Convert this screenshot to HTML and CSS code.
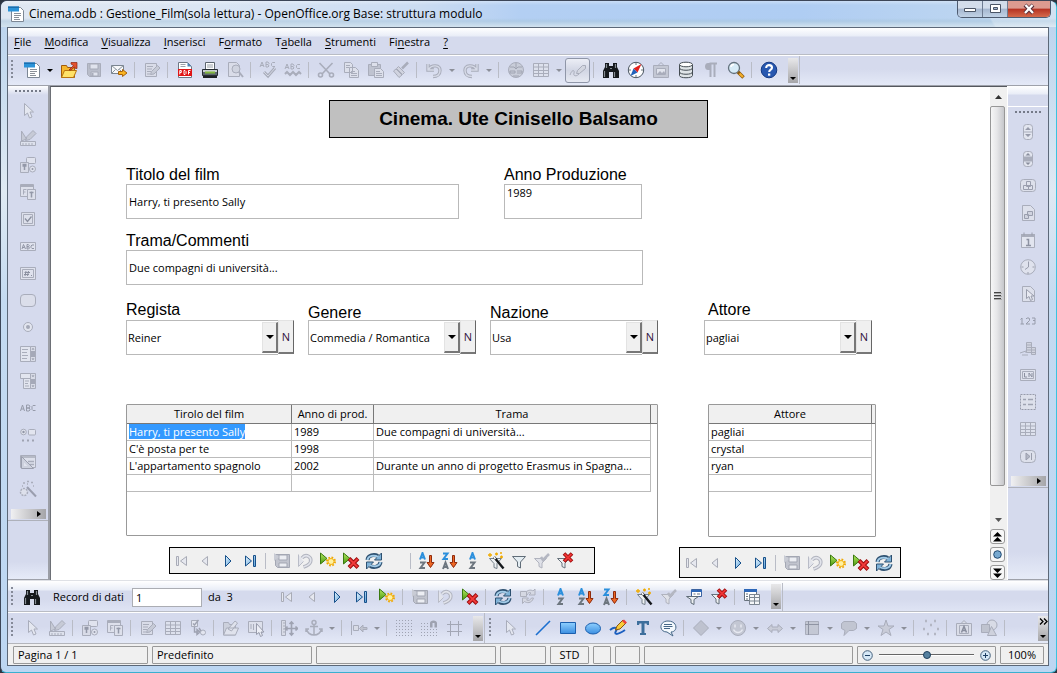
FILE: index.html
```html
<!DOCTYPE html>
<html lang="it">
<head>
<meta charset="utf-8">
<title>Cinema.odb : Gestione_Film(sola lettura) - OpenOffice.org Base: struttura modulo</title>
<link rel="stylesheet" href="styles.css">
</head>
<body>
<svg class="sprite" aria-hidden="true">
<defs>
<linearGradient id="gBlue" x2="0" y2="1"><stop stop-color="#8fd0ff"/><stop offset="1" stop-color="#3b8ee0"/></linearGradient>
<linearGradient id="gNav" x2="1" y2="1"><stop stop-color="#e8f6ff"/><stop offset="1" stop-color="#5aa0d8"/></linearGradient>
<linearGradient id="gGreen" x2="0" y2="1"><stop stop-color="#b4e860"/><stop offset="1" stop-color="#4a9a10"/></linearGradient>
</defs>
<symbol id="new" viewBox="0 0 18 18"><path d="M4.500 2.500h9l3 3v11h-12z" fill="#fff" stroke="#7c8794"/><path d="M1 1.500h11v5H1z" fill="#2b93d8"/><path d="M1 1.500h11v1.500H1z" fill="#1c6fae"/><path d="M7 8.500h7M7 10.500h7M7 12.500h5M7 14.500h6" stroke="#8a9098"/></symbol>
<symbol id="open" viewBox="0 0 18 18"><path d="M1.500 16.500v-12h5l1 2h7v10z" fill="#f6b72c" stroke="#a35c0a"/><path d="M1.500 16.500l3-7h12l-3 7z" fill="#ffe268" stroke="#b9740f"/><path d="M9 9l4.500-4.500L11 3V1.500h6v6h-1.500L14.500 6 11 9z" fill="#e2512e" stroke="#8c2412" stroke-width=".7"/></symbol>
<symbol id="save" viewBox="0 0 18 18"><path d="M2.500 2.500h13v13h-11l-2-2z" fill="#b9bdca" stroke="currentColor"/><path d="M5 3h8v5H5zM6 11h7v4H6z" fill="#e0e3ed" stroke="#a6aab8"/><path d="M7.500 12v3" stroke="currentColor" stroke-width="2"/></symbol>
<symbol id="mail" viewBox="0 0 18 18"><path d="M1.500 4.500h12v8h-12z" fill="#f7f8fa" stroke="#7b8590"/><path d="M1.500 4.500l6 5 6-5M1.500 12.500l4-4M13.500 12.500l-4-4" fill="none" stroke="#8a949e"/><path d="M8.500 10.500h4v-2l4.500 3.500-4.500 3.500v-2h-4z" fill="#f9b420" stroke="#a8620c"/></symbol>
<symbol id="edit" viewBox="0 0 18 18"><path d="M2.500 2.500h11v13h-11z" fill="#d9dce8" stroke="currentColor"/><path d="M4 5.500h6M4 8h5M4 10.500h4M4 13h3" stroke="currentColor"/><path d="M7.500 13.500l1-3 6-6 2.500 2.500-6 6z" fill="#c6cad6" stroke="currentColor"/></symbol>
<symbol id="pdf" viewBox="0 0 18 18"><path d="M2.500 1.500h9l4 4v11h-13z" fill="#fff" stroke="#6f7986"/><path d="M11.500 1.500v4h4z" fill="#4c84b8"/><path d="M4.500 3.500h5M4.500 5.500h5" stroke="#9aa2ac"/><path d="M2 8h14v7H2z" fill="#e01515"/><path d="M3.800 13.500v-4h1.500v2H4M8 9.500v4M8 9.500h1l1 1v2l-1 1H8M12.500 13.500v-4h2M12.500 11.500h1.500" fill="none" stroke="#fff"/></symbol>
<symbol id="print" viewBox="0 0 18 18"><path d="M4.500 8V1.500h9V8" fill="#fff" stroke="#5d6670"/><path d="M6 4h6M6 6h6" stroke="#9aa2aa"/><path d="M1.500 8.500h15v6h-15z" fill="#5f6870" stroke="#272d33"/><path d="M2 9h14v2H2z" fill="#c9cfd4"/><path d="M4 11.500h10" stroke="#82b83c" stroke-width="2"/><path d="M2 16h14" stroke="#1c2024" stroke-width="2"/></symbol>
<symbol id="preview" viewBox="0 0 18 18"><path d="M2.500 1.500h8l3 3v11h-11z" fill="#d9dce8" stroke="currentColor"/><circle cx="10" cy="8" r="4" fill="#cfd3df" stroke="currentColor"/><path d="M13 11l4 5" stroke="currentColor" stroke-width="2"/></symbol>
<symbol id="spell" viewBox="0 0 18 18"><path d="M1 6l2-5 2 5M1.800 4.500h2.400M7 1v5h2l1-1-1-1.500H7h2l1-1L9 1zM16 1.500h-2.500l-1 1v2l1 1H16" fill="none" stroke="currentColor"/><path d="M5 11l4 4 7-8" fill="none" stroke="currentColor" stroke-width="3"/><path d="M5 11l4 4 7-8" fill="none" stroke="#d3d7e4"/></symbol>
<symbol id="autospell" viewBox="0 0 18 18"><path d="M1 8l2-5 2 5M1.800 6.500h2.400M7 3v5h2l1-1-1-1.500H7h2l1-1L9 3zM16 3.500h-2.500l-1 1v2l1 1H16" fill="none" stroke="currentColor"/><path d="M1 13l2-2 3 3 3-3 3 3 3-3 2 2" fill="none" stroke="currentColor" stroke-width="2"/></symbol>
<symbol id="cut" viewBox="0 0 18 18"><path d="M2.500 2l10.500 11M15.500 2L5 13" stroke="currentColor" stroke-width="1.600"/><circle cx="3.500" cy="14" r="2" fill="none" stroke="currentColor" stroke-width="1.600"/><circle cx="14.500" cy="14" r="2" fill="none" stroke="currentColor" stroke-width="1.600"/></symbol>
<symbol id="copy" viewBox="0 0 18 18"><path d="M2.500 1.500h6l2 2v8h-8zM7.500 6.500h6l3 3v7h-9z" fill="#dde0eb" stroke="currentColor"/><path d="M4 4.500h4M4 6.500h3M9 10.500h4M9 12.500h6M9 14.500h6" stroke="currentColor"/></symbol>
<symbol id="paste" viewBox="0 0 18 18"><path d="M1.500 3.500h12v11h-12z" fill="#bfc3d0" stroke="currentColor"/><path d="M4.500 1.500h6v4h-6z" fill="#dde0eb" stroke="currentColor"/><path d="M7.500 7.500h6l3 3v6h-9z" fill="#dde0eb" stroke="currentColor"/><path d="M9 10.500h4M9 12.500h6M9 14.500h6" stroke="currentColor"/></symbol>
<symbol id="brush" viewBox="0 0 18 18"><path d="M16 1.500l-6 6" stroke="currentColor" stroke-width="2.500"/><path d="M6.500 5.500l6 6-2 2-6-6zM4 8l6 6-3 2.500L1.500 10z" fill="#d0d3df" stroke="currentColor"/></symbol>
<symbol id="undo" viewBox="0 0 18 18"><path d="M3 3v6h6M3.500 8.500C7 3 15 4 15 9.500c0 4-3 6-7 6" fill="none" stroke="currentColor" stroke-width="3.400"/><path d="M3 3v6h6M3.500 8.500C7 3 15 4 15 9.500c0 4-3 6-7 6" fill="none" stroke="#d6dae7" stroke-width="1.400"/></symbol>
<symbol id="redo" viewBox="0 0 18 18"><path d="M15 3v6H9M14.500 8.500C11 3 3 4 3 9.500c0 4 3 6 7 6" fill="none" stroke="currentColor" stroke-width="3.400"/><path d="M15 3v6H9M14.500 8.500C11 3 3 4 3 9.500c0 4 3 6 7 6" fill="none" stroke="#d6dae7" stroke-width="1.400"/></symbol>
<symbol id="link" viewBox="0 0 18 18"><circle cx="9" cy="9" r="7.500" fill="#c9cdd9" stroke="currentColor"/><path d="M3 6h4l2 2 2-2h4M9 2v5M3 10h5v2H3zM10 10h5v2h-5M6 15h6" fill="none" stroke="#a0a4b2"/></symbol>
<symbol id="table" viewBox="0 0 18 18"><path d="M1.500 2.500h15v13h-15zM1.500 6h15M1.500 9.500h15M1.500 12.500h15M6.500 2.500v13M11.500 2.500v13" fill="#dde1ed" stroke="currentColor"/></symbol>
<symbol id="pencil" viewBox="0 0 18 18"><path d="M1 14c2-6 5-5 4-2s2 4 5 1" fill="none" stroke="currentColor"/><path d="M7.500 12.500l1-3 5-5h3v3l-6 5z" fill="#d3d6e0" stroke="currentColor"/></symbol>
<symbol id="find" viewBox="0 0 18 18"><path d="M3 2h4v3h4V2h4v4l2 4v7h-6v-6H7v6H1v-7l2-4z" fill="#15191d"/><path d="M4.500 3v4M2.500 10v6M13.500 3v4M12.500 11v5M8 7.500h2" stroke="#868d93" stroke-width="1.200"/></symbol>
<symbol id="compass" viewBox="0 0 18 18"><circle cx="9" cy="9" r="7.700" fill="#fff" stroke="#4a5560"/><path d="M9 2v2M9 14v2M2 9h2M14 9h2" stroke="#68727b"/><path d="M14.500 3L6.500 7.500l4 4z" fill="#e3201b"/><path d="M3.500 15l3-7.500 4 4z" fill="#2362ba"/></symbol>
<symbol id="gallery" viewBox="0 0 18 18"><path d="M6 4.500l3-3 3 3" fill="none" stroke="currentColor"/><path d="M1.500 4.500h15v12h-15z" fill="#c4c8d4" stroke="currentColor"/><path d="M4.500 7.500h9v6h-9z" fill="#e1e4ed" stroke="currentColor"/><path d="M5 13l3-3 2 2 2-2 1.500 3" fill="currentColor"/></symbol>
<symbol id="db" viewBox="0 0 18 18"><path d="M2.500 3.500v11c0 3 13 3 13 0v-11" fill="#dfe4e7" stroke="#444c53"/><ellipse cx="9" cy="3.500" rx="6.500" ry="2.300" fill="#fff" stroke="#444c53"/><path d="M2.500 7c0 3 13 3 13 0M2.500 11c0 3 13 3 13 0" fill="none" stroke="#444c53"/></symbol>
<symbol id="para" viewBox="0 0 18 18"><path d="M8.500 16V2.500H15M12.500 2.500V16" fill="none" stroke="currentColor" stroke-width="2"/><path d="M8.500 2H6C2 2 2 9 6 9h2.500z" fill="currentColor"/></symbol>
<symbol id="zoom" viewBox="0 0 18 18"><circle cx="7" cy="7" r="5.500" fill="#d7ecf8" stroke="#64727e" stroke-width="1.300"/><path d="M4 6c0-1.500 1.500-2.500 3-2.500" fill="none" stroke="#fff" stroke-width="1.500"/><path d="M11 11l5.500 5.500" stroke="#8a5a10" stroke-width="3.500"/><path d="M12.500 12.500l3.500 3.500" stroke="#f5ae28" stroke-width="2.200"/></symbol>
<symbol id="help" viewBox="0 0 18 18"><circle cx="9" cy="9" r="7.800" fill="#2858b0" stroke="#153a84"/><path d="M6.200 7c0-4 5.800-3.500 5.800-.3C12 8.800 9.200 8.500 9.200 11" fill="none" stroke="#fff" stroke-width="2.100"/><path d="M8 12.500h2.300v2.200H8z" fill="#fff"/></symbol>
<symbol id="arrow" viewBox="0 0 18 18"><path d="M5.500 1.500v12l3-2.500 2 5 2.500-1-2-5h3.500z" fill="#e4e7f0" stroke="currentColor"/></symbol>
<symbol id="design" viewBox="0 0 18 18"><path d="M1.500 12.500h15v4h-15z" fill="#dde1ec" stroke="currentColor"/><path d="M2.500 12V2l5 8zM6.500 11.500l1.500-4 6-6 3 3-6 6z" fill="#c6cad6" stroke="currentColor"/><path d="M4 14v2M7 14v2M10 14v2M13 14v2" stroke="currentColor"/></symbol>
<symbol id="control" viewBox="0 0 18 18"><rect x="7.500" y="1.500" width="9" height="6" rx="1" fill="#e0e3ee" stroke="currentColor"/><path d="M1.500 6.500h8v10h-8z" fill="#d8dbe7" stroke="currentColor"/><path d="M3.500 10h4M5.500 8v6M3.500 8.500h4" stroke="#9398a8" stroke-width="1.500"/><circle cx="13.500" cy="13" r="3" fill="#e0e3ee" stroke="currentColor"/><circle cx="13.500" cy="13" r="1" fill="#9398a8"/></symbol>
<symbol id="form" viewBox="0 0 18 18"><path d="M1.500 1.500h13v12h-13z" fill="#dde0eb" stroke="currentColor"/><path d="M1.500 3h13" stroke="currentColor" stroke-width="2"/><path d="M4.500 11.500v-5h3M4.500 9h2" fill="none" stroke="currentColor"/><path d="M8.500 6.500h8v10h-8z" fill="#dde0eb" stroke="currentColor"/><path d="M10.500 9.500h4M12.500 8.500v6" stroke="#9398a8" stroke-width="1.500"/></symbol>
<symbol id="check" viewBox="0 0 18 18"><path d="M2.500 2.500h13v13h-13zM4.500 4.500h9v9h-9z" fill="#dde0eb" stroke="currentColor"/><path d="M6 8.500l2.500 3 4-5" fill="none" stroke="#8b90a0" stroke-width="1.300"/></symbol>
<symbol id="abcbox" viewBox="0 0 18 18"><path d="M1.500 5.500h15v8h-15z" fill="#dfe2ed" stroke="currentColor"/><path d="M3 12l1.500-4.500L6.500 12M3.500 10.500h2M8 7.500V12h1.500l1-1-1-1.300H8h1.500l.8-1-1-1.200zM15 8h-2l-1 1v1.500l1 1h2" fill="none" stroke="#9095a5"/></symbol>
<symbol id="fmt" viewBox="0 0 18 18"><path d="M1.500 3.500h15v12h-15zM3.500 5.500h11v8h-11z" fill="#dfe2ed" stroke="currentColor"/><path d="M7 7l-1 5M9.500 7l-1 5M5.500 8.500H11M5 10.500h5M12 11.500h1" stroke="#8b90a0"/></symbol>
<symbol id="pushb" viewBox="0 0 18 18"><rect x="1.500" y="3.500" width="15" height="12" rx="3.500" fill="#dbdeea" stroke="currentColor"/></symbol>
<symbol id="radio" viewBox="0 0 18 18"><circle cx="9" cy="9" r="4.500" fill="#e2e5ef" stroke="currentColor"/><circle cx="9" cy="9" r="2" fill="#a5a9b8"/></symbol>
<symbol id="listb" viewBox="0 0 18 18"><path d="M1.500 1.500h10v15h-10z" fill="#e2e5ef" stroke="currentColor"/><path d="M3 4.500h6M3 7.500h5M3 10.500h6M3 13.500h5" stroke="currentColor"/><path d="M11.500 1.500h5v15h-5z" fill="#d8dbe6" stroke="currentColor"/><path d="M12 6h4v6h-4z" fill="#a5a9b8"/><path d="M14 3l1.500 1.500h-3zM14 15l1.500-1.500h-3z" fill="#888d9d"/></symbol>
<symbol id="combo" viewBox="0 0 18 18"><path d="M1.500 1.500h10v5h-10zM4.500 6.500h7v10h-7z" fill="#e2e5ef" stroke="currentColor"/><path d="M6 9h4M6 11.500h3M6 14h4" stroke="currentColor"/><path d="M11.500 1.500h5v15h-5z" fill="#d8dbe6" stroke="currentColor"/><path d="M12 7h4v5h-4z" fill="#a5a9b8"/><path d="M14 5l1.500-1.500h-3zM14 15l1.500-1.500h-3z" fill="#888d9d"/></symbol>
<symbol id="abc" viewBox="0 0 18 18"><path d="M1.500 12l2-6 2 6M2.200 10h2.600M7.500 6v6H10l1-1v-1l-1-1H7.500H10l.8-1V7l-1-1zM16.500 6.500H14l-1 1v3l1 1h2.500" fill="none" stroke="#969baa"/></symbol>
<symbol id="more" viewBox="0 0 18 18"><circle cx="4.500" cy="6" r="2.800" fill="#e2e5ef" stroke="currentColor"/><circle cx="4.500" cy="6" r="1.200" fill="#9095a5"/><rect x="9.500" y="3.500" width="7" height="5.500" rx="1" fill="#e2e5ef" stroke="currentColor"/><path d="M3 14.500h2M8 14.500h2M13 14.500h2" stroke="#9fa3b2" stroke-width="2"/></symbol>
<symbol id="fdesign" viewBox="0 0 18 18"><path d="M1.500 2.500h15v12h-15z" fill="#dde0eb" stroke="currentColor"/><path d="M1.500 4h15M9 8.500h6M10 11.500h5" stroke="currentColor" stroke-width="1.500"/><path d="M2.500 15.500v-12l12 12z" fill="#ced2de" stroke="#9ca0af"/><path d="M5 13V9.500L8.500 13z" fill="#e2e5ef"/></symbol>
<symbol id="wand" viewBox="0 0 18 18"><path d="M8 7l9 9.500" stroke="#9a9eae" stroke-width="2"/><circle cx="5" cy="12" r="3.500" fill="#dde0eb" stroke="currentColor" stroke-width="1.500" stroke-dasharray="2 1"/><path d="M4 3h2M8 1.500h2M12 2.500h2M3 6h1M14 6h1M8 4h1" stroke="currentColor" stroke-width="1.500"/></symbol>
<symbol id="spin" viewBox="0 0 18 18"><rect x="4.500" y="1.500" width="9" height="15" rx="3" fill="#e2e5ef" stroke="currentColor"/><path d="M5 9h8" stroke="currentColor"/><path d="M9 4l3 3H6zM9 14l3-3H6z" fill="#979bab"/></symbol>
<symbol id="sbar" viewBox="0 0 18 18"><rect x="4.500" y="1.500" width="9" height="15" rx="3" fill="#e2e5ef" stroke="currentColor"/><path d="M5 6.500h8v5H5z" fill="#a9adbb"/><path d="M9 3l2.500 2.500h-5zM9 15l2.500-2.500h-5z" fill="#888d9d"/></symbol>
<symbol id="imgb" viewBox="0 0 18 18"><rect x="1.500" y="2.500" width="15" height="12" rx="3" fill="#dde0eb" stroke="currentColor"/><path d="M7.500 4.500h4v5h-4zM4.500 8.500h5v4h-5zM9.500 8.500h4v4h-4z" fill="#dfe2ec" stroke="#9a9eae"/></symbol>
<symbol id="imgc" viewBox="0 0 18 18"><path d="M3.500 1.500h8l4 4v11h-12z" fill="#dde0eb" stroke="currentColor"/><path d="M8.500 7.500h5v4h-5zM5.500 10.500h4v4h-4z" fill="#d0d3df" stroke="#9a9eae"/></symbol>
<symbol id="date" viewBox="0 0 18 18"><path d="M2.500 3.500h13v13h-13z" fill="#e2e5ef" stroke="currentColor"/><path d="M2 4.500h14" stroke="currentColor" stroke-width="3"/><path d="M5 1.500v3M13 1.500v3" stroke="#999dac"/><path d="M7.500 8.500h2v5.500M7 14.500h5" fill="none" stroke="#8d92a2" stroke-width="1.500"/></symbol>
<symbol id="time" viewBox="0 0 18 18"><circle cx="9" cy="9" r="7.300" fill="#dfe2ed" stroke="currentColor"/><path d="M9.500 3.500V9L6 11.500M2.500 9h2M13.500 9h2M9 14v2" fill="none" stroke="#999dac"/></symbol>
<symbol id="file" viewBox="0 0 18 18"><path d="M3.500 1.500h8l4 4v11h-12z" fill="#dde0eb" stroke="currentColor"/><path d="M7.500 4.500v9l2.500-2 1.500 4 2-1-1.500-3.500h3z" fill="#e8eaf2" stroke="#999dac"/></symbol>
<symbol id="num" viewBox="0 0 18 18"><path d="M1.500 7.500L3 6v6M1.500 12h3.500M7 7l1-1h2l.5 1v1.500L7 12h4M13 6h3v2.500h-2H16V12h-3" fill="none" stroke="#969baa"/></symbol>
<symbol id="money" viewBox="0 0 18 18"><path d="M7.500 3.500h5v10h-5zM12.500 8.500h4v7h-4z" fill="#d0d3df" stroke="currentColor"/><path d="M8 6h4M8 8.500h4M8 11h4M13 11h3M13 13.500h3M1 14l6-2v2M3 16h6" stroke="currentColor" fill="none"/></symbol>
<symbol id="pattern" viewBox="0 0 18 18"><path d="M1.500 3.500h15v11h-15zM3.500 5.500h11v7h-11z" fill="#dfe2ed" stroke="currentColor"/><path d="M5.500 7v4H8M10 11V7l3 4V7" fill="none" stroke="#8b90a0"/></symbol>
<symbol id="group" viewBox="0 0 18 18"><path d="M1.500 1.500h15v15h-15z" fill="#dde0eb" stroke="#979bab" stroke-dasharray="2 1"/><path d="M4 6.500h3M4 11.500h3M9 6.500h5M9 11.500h5" stroke="#9fa3b2" stroke-width="1.500"/></symbol>
<symbol id="navc" viewBox="0 0 18 18"><rect x="1.500" y="3.500" width="15" height="12" rx="4" fill="#dde0eb" stroke="currentColor"/><path d="M7 6l4 3.500L7 13zM12.500 6v7" fill="#b3b7c5" stroke="#999dac"/></symbol>
<symbol id="first" viewBox="0 0 18 18"><path d="M3.500 4.500h2v9h-2zM13.500 4.500v9l-6-4.500z" fill="#e6e8ef" stroke="#a8abb6"/></symbol>
<symbol id="prev" viewBox="0 0 18 18"><path d="M11.500 4.500v9L6 9z" fill="#e6e8ef" stroke="#a8abb6"/></symbol>
<symbol id="next" viewBox="0 0 18 18"><path d="M6.500 3.500v11l5.500-5.500z" fill="url(#gNav)" stroke="#17508a"/></symbol>
<symbol id="last" viewBox="0 0 18 18"><path d="M3.500 4v10l6-5zM11.500 3.500h2v11h-2z" fill="url(#gNav)" stroke="#17508a"/></symbol>
<symbol id="rnew" viewBox="0 0 18 18"><path d="M1.500 1v11l6.500-5.500z" fill="url(#gGreen)" stroke="#3a7a10"/><circle cx="12" cy="9.500" r="4" fill="none" stroke="#f0a800" stroke-width="2" stroke-dasharray="1.700 1.440"/><circle cx="12" cy="9.500" r="3" fill="#fff1a0" stroke="#f2b010"/></symbol>
<symbol id="rdel" viewBox="0 0 18 18"><path d="M1.500 1v11l6.500-5.500z" fill="url(#gGreen)" stroke="#3a7a10"/><path d="M7 6.500l9 9M16 6.500l-9 9" stroke="#9c0c0c" stroke-width="4"/><path d="M7.500 7l8 8M15.500 7l-8 8" stroke="#f03a3a" stroke-width="2"/></symbol>
<symbol id="rundo" viewBox="0 0 18 18"><path d="M2.500 2.500v12l5-5" fill="#e2e4eb" stroke="#b9bcc7"/><path d="M6 6c4-5 10-1 8.500 4-1 3-4 4-7 5" fill="none" stroke="#b0b3be" stroke-width="3.600"/><path d="M6 6c4-5 10-1 8.500 4-1 3-4 4-7 5" fill="none" stroke="#e2e4eb" stroke-width="1.600"/></symbol>
<symbol id="rsave" viewBox="0 0 18 18"><path d="M2.500 2.500h14v13h-12l-2-2z" fill="#c1c4ce" stroke="#a3a7b3"/><path d="M6 3h8v5H6zM6 11h8v4H6z" fill="#eceef3" stroke="#a3a7b3"/><path d="M1 1l5 4-5 4z" fill="#c9ccd5"/></symbol>
<symbol id="refresh" viewBox="0 0 18 18"><g fill="none" stroke="#2d5070" stroke-width="4"><path d="M2.500 8C3 3 9 2 13 4"/><path d="M15.500 10C15 15 9 16 5 14"/></g><path d="M16.500 1v7h-7zM1.500 17v-7h7z" fill="#7fb2d8" stroke="#2d5070"/><g fill="none" stroke="#a2cbe8" stroke-width="2"><path d="M2.500 8C3 3.500 9 2.500 13.500 5"/><path d="M15.500 10C15 14.500 9 15.500 4.500 13"/></g></symbol>
<symbol id="refreshg" viewBox="0 0 18 18"><g fill="#d5d8e3" stroke="#adb0bd"><path d="M6.500 5C9 1 13 2 14 3l2-2v6h-6l2-2c-2-1-3 0-4 2zM14.500 10c-2 6-7 5-9 3.500l-2 2V10h6l-2 2c2 1 4 0 5-2z"/><path d="M1.500 3.500h6v5h-6z"/></g></symbol>
<symbol id="az" viewBox="0 0 18 18"><path d="M6 7.500L8.500 1 11 7.500M7 5.500h3" fill="none" stroke="#2b8fdc" stroke-width="2"/><path d="M6 10.500h4.500L6.500 16H11" fill="none" stroke="#6d767f" stroke-width="2"/></symbol>
<symbol id="azd" viewBox="0 0 18 18"><path d="M2 7.500L4.500 1 7 7.500M3 5.500h3" fill="none" stroke="#2b8fdc" stroke-width="2"/><path d="M2 10.500h4.500L2.500 16H7" fill="none" stroke="#6d767f" stroke-width="2"/><path d="M11.500 3.500h2v7h2.500l-3.500 5-3.500-5h2.500z" fill="#ee6724" stroke="#8e2a0c"/></symbol>
<symbol id="zad" viewBox="0 0 18 18"><path d="M2 1.500h4.500L2.500 7H7" fill="none" stroke="#2b8fdc" stroke-width="2"/><path d="M2 17l2.500-6.500L7 17M3 15h3" fill="none" stroke="#6d767f" stroke-width="2"/><path d="M11.500 3.500h2v7h2.500l-3.500 5-3.500-5h2.500z" fill="#ee6724" stroke="#8e2a0c"/></symbol>
<symbol id="fwiz" viewBox="0 0 18 18"><path d="M2.500 6.500h12l-4.500 5v5l-3-1v-4z" fill="#eef1f3" stroke="#75808a"/><path d="M7 5l9.500 11.500" stroke="#15181c" stroke-width="2.400"/><path d="M7 5l1.500 2" stroke="#fff" stroke-width="1.500"/><path d="M1 3h4M3 1v4M8 2h3M9.500.5v3M13 5h3M14.500 3.500v3M13 1h2" stroke="#f0ab00" stroke-width="1.300"/></symbol>
<symbol id="filter" viewBox="0 0 18 18"><path d="M2.500 4.500h13l-5 5.500v6l-3-1.500V10z" fill="#e4edf2" stroke="#606d78"/></symbol>
<symbol id="fapply" viewBox="0 0 18 18"><path d="M1.500 6.500h12l-4.500 4.500v5l-3-1.500V11z" fill="#dfe1e8" stroke="#b0b3be"/><path d="M8 5l2 3 6-6" fill="none" stroke="#b4b7c2" stroke-width="2.500"/></symbol>
<symbol id="fdel" viewBox="0 0 18 18"><path d="M1.500 6.500h12l-4.500 4.500v5l-3-1.500V11z" fill="#eef1f3" stroke="#66717b"/><path d="M8 1.500l8 8M16 1.500l-8 8" stroke="#9c0c0c" stroke-width="3.700"/><path d="M8.500 2l7 7M15.500 2l-7 7" stroke="#ee3434" stroke-width="1.800"/></symbol>
<symbol id="fform" viewBox="0 0 18 18"><path d="M6.500 1.500h10v7h-10z" fill="#fff" stroke="#3b63a0"/><path d="M6 3h11" stroke="#2d67b8" stroke-width="2"/><path d="M8.500 6h2M12 6h3" stroke="#687380"/><path d="M1.500 8.500h12l-4.500 3v5l-3-1.500v-3.500z" fill="#eef1f3" stroke="#606d78"/></symbol>
<symbol id="dsrc" viewBox="0 0 18 18"><path d="M1.500 1.500h12v11h-12z" fill="#fff" stroke="#68727c"/><path d="M1 2.500h13" stroke="#2d67b8" stroke-width="3"/><path d="M3 6h2M3 8.500h2M3 11h2" stroke="#68727c"/><path d="M6.500 6.500h10v10h-10zM6.500 9.500h10M6.500 13h10M11.500 6.500v10" fill="#f4f6f8" stroke="#7b8590"/></symbol>
<symbol id="order" viewBox="0 0 18 18"><path d="M2.500 1.500h6v6h-6z" fill="#e2e5ef" stroke="currentColor"/><path d="M4 4.500l1.500 1.500 4-5M5.500 8v5h4M10 9l2 3M8 10.500l3 2.500-3 2.500z" fill="none" stroke="#9ea2b1" stroke-width="1.400"/><circle cx="14" cy="13.500" r="2.500" fill="#e2e5ef" stroke="currentColor"/></symbol>
<symbol id="opend" viewBox="0 0 18 18"><path d="M1.500 16V3.500h5l1 2h6V16z" fill="#ccd0dc" stroke="currentColor"/><path d="M1.500 16l3-7h12l-3 7zM6 10l7-8 2.500 2-6 8z" fill="#dfe2ec" stroke="currentColor"/></symbol>
<symbol id="autof" viewBox="0 0 18 18"><path d="M1.500 2.500h14v11h-14z" fill="#dde0eb" stroke="currentColor"/><path d="M4 5v5M6.500 5v6" stroke="currentColor"/><path d="M9.500 4.500v11l2.500-2 1.500 4 2-1-1.500-3.500h3z" fill="#eceef5" stroke="#979bab"/></symbol>
<symbol id="pos" viewBox="0 0 18 18"><path d="M1.500 1.500h4v15h-4z" fill="#d8dbe6" stroke="currentColor"/><path d="M3 4h2M3 7h2M3 10h2M3 13h2" stroke="currentColor"/><path d="M11.500 3v13M5.500 9.500h12M9.500 5l2-2 2 2M9.500 14l2 2 2-2M7.500 7.500l-2 2 2 2M15.500 7.500l2 2-2 2" fill="none" stroke="#9fa3b2" stroke-width="1.600"/></symbol>
<symbol id="anchor" viewBox="0 0 18 18"><circle cx="9" cy="3.500" r="2" fill="none" stroke="currentColor" stroke-width="1.500"/><path d="M9 5.500v10M5 7.500h8M1.500 10c1 4 4 6 7.500 6s6.500-2 7.500-6M1 13v-3h3M17 13v-3h-3" fill="none" stroke="currentColor" stroke-width="1.500"/></symbol>
<symbol id="align" viewBox="0 0 18 18"><path d="M1.500 2v14" stroke="currentColor"/><path d="M3.500 6.500h5v5h-5z" fill="#d8dbe6" stroke="currentColor"/><path d="M9.500 9.500L13 6v2.500h4v2h-4V13z" fill="#bfc2ce" stroke="currentColor"/></symbol>
<symbol id="grid" viewBox="0 0 18 18"><path d="M1 1.500h16M1 4.500h16M1 7.500h16M1 10.500h16M1 13.500h16M1 16.500h16" stroke="#9fa3b2" stroke-dasharray="1 2"/></symbol>
<symbol id="snap" viewBox="0 0 18 18"><path d="M1 4.500h10M1 7.500h10M1 10.500h16M1 13.500h16M1 16.500h16" stroke="#9fa3b2" stroke-dasharray="1 2"/><path d="M10 8.500V4c0-3.500 7-3.500 7 0v4.500h-2.500V4h-2v4.500z" fill="#9ea2b0"/></symbol>
<symbol id="guides" viewBox="0 0 18 18"><path d="M2 5.500h15M2 12.500h15M5.500 2v15M13.500 2v15" stroke="#a3a7b5"/></symbol>
<symbol id="line" viewBox="0 0 18 18"><path d="M2 16L16 2" stroke="#1b6fd0" stroke-width="1.600"/></symbol>
<symbol id="rect" viewBox="0 0 18 18"><path d="M1.500 3.500h15v11h-15z" fill="url(#gBlue)" stroke="#1b5fae"/></symbol>
<symbol id="oval" viewBox="0 0 18 18"><ellipse cx="9" cy="9.500" rx="7.500" ry="5.500" fill="url(#gBlue)" stroke="#1b5fae"/></symbol>
<symbol id="free" viewBox="0 0 18 18"><path d="M1 11c5-4 8-2 6 1s0 5 9-1" fill="none" stroke="#1b5fc0" stroke-width="2"/><path d="M6.500 11l1.500-4 6-6 3 3-6 6z" fill="#f8cb3a" stroke="#89540e"/><path d="M13 2l2-1.500 3 3L16 5z" fill="#ea4040"/></symbol>
<symbol id="text" viewBox="0 0 18 18"><path d="M3 2h12v4h-2l-.5-1.500H10.500V14H12v2H6v-2h1.500V4.500H5.500L5 6H3z" fill="#3e6f9c"/></symbol>
<symbol id="call" viewBox="0 0 18 18"><path d="M9 2c10 0 10 11 3 11l2 4-6-4C-.5 13 0 2 9 2z" fill="#f4f9fd" stroke="#456787"/><path d="M5 5.500h8M4.500 7.500h9M5 9.500h6" stroke="#456787"/></symbol>
<symbol id="diamond" viewBox="0 0 18 18"><path d="M9 1.500L16.500 9 9 16.500 1.500 9z" fill="#bec2cf" stroke="currentColor"/></symbol>
<symbol id="smile" viewBox="0 0 18 18"><circle cx="9" cy="9" r="7.500" fill="#c3c7d3" stroke="currentColor"/><path d="M6 5.500v3M12 5.500v3M4.500 10.500c2 4 7 4 9 0" fill="none" stroke="#e7e9f1" stroke-width="1.500"/></symbol>
<symbol id="harrow" viewBox="0 0 18 18"><path d="M1.500 9.500L6 5.500v2.500h6V5.500l4.500 4-4.500 4V11H6v2.500z" fill="#c9ccd8" stroke="currentColor"/></symbol>
<symbol id="flow" viewBox="0 0 18 18"><path d="M2.500 2.500h13v13h-13z" fill="#c4c8d4" stroke="currentColor"/><path d="M5.500 2v14M2 5.500h14" stroke="#8f94a3"/></symbol>
<symbol id="bubble" viewBox="0 0 18 18"><path d="M4 2.500h10l2.500 2v5l-3 2H9l-5 5 1-5-3.500-2v-5z" fill="#c1c5d1" stroke="currentColor"/></symbol>
<symbol id="star" viewBox="0 0 18 18"><path d="M9 1l2 6h6l-5 3.500 2 6-5-3.500-5 3.500 2-6L1 7h6z" fill="#c9ccd8" stroke="currentColor"/></symbol>
<symbol id="points" viewBox="0 0 18 18"><path d="M3 2h2M12 2h2M8 6h2M1 10h2M15 10h2M5 15h2M12 15h2" stroke="#b3b6c3" stroke-width="2.500"/></symbol>
<symbol id="fontw" viewBox="0 0 18 18"><path d="M6 4.500l3-3 3 3M1.500 4.500h15v12h-15zM4.500 6.500h9v8h-9z" fill="#dadde8" stroke="currentColor"/><path d="M6.500 13.500L9 7.500l2.500 6M7.500 11.500h3" fill="none" stroke="#888d9d" stroke-width="1.500"/></symbol>
<symbol id="shapes" viewBox="0 0 18 18"><circle cx="12" cy="6" r="5" fill="#d8dbe6" stroke="currentColor"/><path d="M1.500 5.500h8v8h-8z" fill="#bfc3cf" stroke="currentColor"/><path d="M11.500 7.500l5 9h-9z" fill="#ced1dc" stroke="currentColor"/></symbol>
</svg>

<div class="window">
<header class="titlebar">
  <svg class="ic"><use href="#new"/></svg>
  <h1>Cinema.odb : Gestione_Film(sola lettura) - OpenOffice.org Base: struttura modulo</h1>
  <div class="winbtns">
    <button aria-label="Riduci a icona"><svg width="14" height="10" viewBox="0 0 14 10"><path d="M1.500 4.500h11v3h-11z" fill="#fff" stroke="#4b5566"/></svg></button>
    <button aria-label="Ingrandisci"><svg width="14" height="12" viewBox="0 0 14 12"><path d="M2.500 1.500h10v8h-10z" fill="#fff" stroke="#4b5566"/><path d="M5.500 4.500h4v2h-4z" fill="#9fb3cf" stroke="#4b5566"/></svg></button>
    <button class="close" aria-label="Chiudi"><svg width="14" height="12" viewBox="0 0 14 12"><path d="M3 2l8 8M11 2l-8 8" stroke="#59303a" stroke-width="4"/><path d="M3.500 2l7.500 8M10.500 2L3 10" stroke="#fff" stroke-width="2.300"/></svg></button>
  </div>
</header>

<div class="client">
<nav class="menubar">
  <button><u>F</u>ile</button><button><u>M</u>odifica</button><button><u>V</u>isualizza</button><button><u>I</u>nserisci</button><button>F<u>o</u>rmato</button><button>T<u>a</u>bella</button><button><u>S</u>trumenti</button><button>Fi<u>n</u>estra</button><button><u>?</u></button>
</nav>

<div class="bar std">
  <i class="grip"></i>
  <button class="b"><svg class="ic"><use href="#new"/></svg></button><button class="dd on"></button>
  <button class="b"><svg class="ic"><use href="#open"/></svg></button>
  <button class="b"><svg class="ic"><use href="#save"/></svg></button>
  <button class="b"><svg class="ic"><use href="#mail"/></svg></button><i class="sep"></i>
  <button class="b"><svg class="ic"><use href="#edit"/></svg></button><i class="sep"></i>
  <button class="b"><svg class="ic"><use href="#pdf"/></svg></button>
  <button class="b"><svg class="ic"><use href="#print"/></svg></button>
  <button class="b"><svg class="ic"><use href="#preview"/></svg></button><i class="sep"></i>
  <button class="b"><svg class="ic"><use href="#spell"/></svg></button>
  <button class="b"><svg class="ic"><use href="#autospell"/></svg></button><i class="sep"></i>
  <button class="b"><svg class="ic"><use href="#cut"/></svg></button>
  <button class="b"><svg class="ic"><use href="#copy"/></svg></button>
  <button class="b"><svg class="ic"><use href="#paste"/></svg></button>
  <button class="b"><svg class="ic"><use href="#brush"/></svg></button><i class="sep"></i>
  <button class="b"><svg class="ic"><use href="#undo"/></svg></button><button class="dd"></button>
  <button class="b"><svg class="ic"><use href="#redo"/></svg></button><button class="dd"></button><i class="sep"></i>
  <button class="b"><svg class="ic"><use href="#link"/></svg></button>
  <button class="b"><svg class="ic"><use href="#table"/></svg></button><button class="dd"></button>
  <button class="b pressed"><svg class="ic"><use href="#pencil"/></svg></button><i class="sep"></i>
  <button class="b"><svg class="ic"><use href="#find"/></svg></button>
  <button class="b"><svg class="ic"><use href="#compass"/></svg></button>
  <button class="b"><svg class="ic"><use href="#gallery"/></svg></button>
  <button class="b"><svg class="ic"><use href="#db"/></svg></button>
  <button class="b"><svg class="ic"><use href="#para"/></svg></button>
  <button class="b"><svg class="ic"><use href="#zoom"/></svg></button><i class="sep"></i>
  <button class="b"><svg class="ic"><use href="#help"/></svg></button>
  <button class="over"></button><i class="edge"></i>
</div>

<div class="work">
  <aside class="side">
    <div class="tools">
      <i class="hgrip"></i>
      <button class="v"><svg class="ic"><use href="#arrow"/></svg></button>
      <button class="v"><svg class="ic"><use href="#design"/></svg></button>
      <button class="v"><svg class="ic"><use href="#control"/></svg></button>
      <button class="v"><svg class="ic"><use href="#form"/></svg></button>
      <button class="v"><svg class="ic"><use href="#check"/></svg></button>
      <button class="v"><svg class="ic"><use href="#abcbox"/></svg></button>
      <button class="v"><svg class="ic"><use href="#fmt"/></svg></button>
      <button class="v"><svg class="ic"><use href="#pushb"/></svg></button>
      <button class="v"><svg class="ic"><use href="#radio"/></svg></button>
      <button class="v"><svg class="ic"><use href="#listb"/></svg></button>
      <button class="v"><svg class="ic"><use href="#combo"/></svg></button>
      <button class="v"><svg class="ic"><use href="#abc"/></svg></button>
      <button class="v"><svg class="ic"><use href="#more"/></svg></button>
      <button class="v"><svg class="ic"><use href="#fdesign"/></svg></button>
      <button class="v"><svg class="ic"><use href="#wand"/></svg></button>
      <button class="hover"></button>
    </div>
    <div class="rest"></div>
  </aside>

  <main class="page">
    <h2>Cinema. Ute Cinisello Balsamo</h2>
    <div class="row r1">
      <div class="field w-title"><label for="titolo">Titolo del film</label><input id="titolo" value="Harry, ti presento Sally" readonly></div>
      <div class="field w-year"><label for="anno">Anno Produzione</label><textarea id="anno" readonly>1989</textarea></div>
    </div>
    <div class="row r2">
      <div class="field w-plot"><label for="trama">Trama/Commenti</label><input id="trama" value="Due compagni di università..." readonly></div>
    </div>
    <div class="row r3">
      <div class="field w-combo"><label for="regista">Regista</label><div class="cb"><span class="sel"><select id="regista"><option>Reiner</option></select><i></i></span><button>N</button></div></div>
      <div class="field w-combo lowlabel"><label for="genere">Genere</label><div class="cb"><span class="sel"><select id="genere"><option>Commedia / Romantica</option></select><i></i></span><button>N</button></div></div>
      <div class="field w-combo lowlabel"><label for="nazione">Nazione</label><div class="cb"><span class="sel"><select id="nazione"><option>Usa</option></select><i></i></span><button>N</button></div></div>
      <div class="field w-combo actor"><label for="attore">Attore</label><div class="cb"><span class="sel"><select id="attore"><option>pagliai</option></select><i></i></span><button>N</button></div></div>
    </div>
    <div class="row r4">
      <div class="tbl films">
        <table>
          <colgroup><col class="c1"><col class="c2"><col class="c3"><col class="c4"></colgroup>
          <thead><tr><th>Tirolo del film</th><th>Anno di prod.</th><th>Trama</th><th></th></tr></thead>
          <tbody>
            <tr><td><mark>Harry, ti presento Sally</mark></td><td>1989</td><td>Due compagni di università...</td></tr>
            <tr><td>C'è posta per te</td><td>1998</td><td></td></tr>
            <tr><td>L'appartamento spagnolo</td><td>2002</td><td>Durante un anno di progetto Erasmus in Spagna...</td></tr>
            <tr><td></td><td></td><td></td></tr>
          </tbody>
        </table>
      </div>
      <div class="tbl actors">
        <table>
          <colgroup><col><col class="c5"></colgroup>
          <thead><tr><th>Attore</th><th></th></tr></thead>
          <tbody><tr><td>pagliai</td></tr><tr><td>crystal</td></tr><tr><td>ryan</td></tr><tr><td></td></tr></tbody>
        </table>
      </div>
    </div>
    <div class="row r5">
      <div class="rec n1">
        <button class="b"><svg class="ic"><use href="#first"/></svg></button><button class="b"><svg class="ic"><use href="#prev"/></svg></button><button class="b"><svg class="ic"><use href="#next"/></svg></button><button class="b"><svg class="ic"><use href="#last"/></svg></button><i class="sep"></i>
        <button class="b"><svg class="ic"><use href="#rsave"/></svg></button><button class="b"><svg class="ic"><use href="#rundo"/></svg></button><button class="b"><svg class="ic"><use href="#rnew"/></svg></button><button class="b"><svg class="ic"><use href="#rdel"/></svg></button><button class="b"><svg class="ic"><use href="#refresh"/></svg></button>
        <i class="sep far"></i>
        <button class="b"><svg class="ic"><use href="#azd"/></svg></button><button class="b"><svg class="ic"><use href="#zad"/></svg></button><button class="b"><svg class="ic"><use href="#az"/></svg></button><button class="b"><svg class="ic"><use href="#fwiz"/></svg></button><button class="b"><svg class="ic"><use href="#filter"/></svg></button><button class="b"><svg class="ic"><use href="#fapply"/></svg></button><button class="b"><svg class="ic"><use href="#fdel"/></svg></button>
      </div>
      <div class="rec n2">
        <button class="b"><svg class="ic"><use href="#first"/></svg></button><button class="b"><svg class="ic"><use href="#prev"/></svg></button><button class="b"><svg class="ic"><use href="#next"/></svg></button><button class="b"><svg class="ic"><use href="#last"/></svg></button><i class="sep"></i>
        <button class="b"><svg class="ic"><use href="#rsave"/></svg></button><button class="b"><svg class="ic"><use href="#rundo"/></svg></button><button class="b"><svg class="ic"><use href="#rnew"/></svg></button><button class="b"><svg class="ic"><use href="#rdel"/></svg></button><button class="b"><svg class="ic"><use href="#refresh"/></svg></button>
      </div>
    </div>
  </main>

  <div class="scroll">
    <button class="sa"><svg width="7" height="4"><path d="M0 4l3.500-4L7 4z" fill="#333"/></svg></button>
    <div class="thumb"><svg width="8" height="9"><path d="M0 .5h7M0 3.500h7M0 6.500h7" stroke="#444"/><path d="M0 1.500h8M0 4.500h8M0 7.500h8" stroke="#aaa"/></svg></div>
    <button class="sa low"><svg width="7" height="4"><path d="M0 0l3.500 4L7 0z" fill="#555"/></svg></button>
    <button class="pg"><svg width="9" height="10"><path d="M0 4.500L4.500 0 9 4.500zM0 9.500L4.500 5 9 9.500z"/></svg></button>
    <button class="pg"><svg width="9" height="9"><circle cx="4.500" cy="4.500" r="3.800" fill="#78a9d0" stroke="#1f4870"/></svg></button>
    <button class="pg"><svg width="9" height="10"><path d="M0 .5L4.500 5 9 .5zM0 5.500L4.500 10 9 5.500z"/></svg></button>
  </div>

  <aside class="side right">
    <div class="cap"></div>
    <div class="tools">
      <i class="hgrip"></i>
      <button class="v"><svg class="ic"><use href="#spin"/></svg></button>
      <button class="v"><svg class="ic"><use href="#sbar"/></svg></button>
      <button class="v"><svg class="ic"><use href="#imgb"/></svg></button>
      <button class="v"><svg class="ic"><use href="#imgc"/></svg></button>
      <button class="v"><svg class="ic"><use href="#date"/></svg></button>
      <button class="v"><svg class="ic"><use href="#time"/></svg></button>
      <button class="v"><svg class="ic"><use href="#file"/></svg></button>
      <button class="v"><svg class="ic"><use href="#num"/></svg></button>
      <button class="v"><svg class="ic"><use href="#money"/></svg></button>
      <button class="v"><svg class="ic"><use href="#pattern"/></svg></button>
      <button class="v"><svg class="ic"><use href="#group"/></svg></button>
      <button class="v"><svg class="ic"><use href="#table"/></svg></button>
      <button class="v"><svg class="ic"><use href="#navc"/></svg></button>
      <button class="hover"></button>
    </div>
    <div class="rest"></div>
  </aside>
</div>

<div class="bar nav">
  <i class="grip"></i>
  <button class="b"><svg class="ic"><use href="#find"/></svg></button>
  <label for="rec">Record di dati</label><input id="rec" value="1"><span class="of">da&nbsp; 3</span>
  <button class="b"><svg class="ic"><use href="#first"/></svg></button>
  <button class="b"><svg class="ic"><use href="#prev"/></svg></button>
  <button class="b"><svg class="ic"><use href="#next"/></svg></button>
  <button class="b"><svg class="ic"><use href="#last"/></svg></button>
  <button class="b"><svg class="ic"><use href="#rnew"/></svg></button><i class="sep"></i>
  <button class="b"><svg class="ic"><use href="#rsave"/></svg></button>
  <button class="b"><svg class="ic"><use href="#rundo"/></svg></button>
  <button class="b"><svg class="ic"><use href="#rdel"/></svg></button><i class="sep"></i>
  <button class="b"><svg class="ic"><use href="#refresh"/></svg></button>
  <button class="b"><svg class="ic"><use href="#refreshg"/></svg></button><i class="sep"></i>
  <button class="b"><svg class="ic"><use href="#az"/></svg></button>
  <button class="b"><svg class="ic"><use href="#azd"/></svg></button>
  <button class="b"><svg class="ic"><use href="#zad"/></svg></button><i class="sep"></i>
  <button class="b"><svg class="ic"><use href="#fwiz"/></svg></button>
  <button class="b"><svg class="ic"><use href="#fapply"/></svg></button>
  <button class="b"><svg class="ic"><use href="#fform"/></svg></button>
  <button class="b"><svg class="ic"><use href="#fdel"/></svg></button><i class="sep"></i>
  <button class="b"><svg class="ic"><use href="#dsrc"/></svg></button>
  <button class="over"></button><i class="edge"></i>
</div>

<div class="bar draw">
  <i class="grip"></i>
  <button class="b"><svg class="ic"><use href="#arrow"/></svg></button>
  <button class="b"><svg class="ic"><use href="#design"/></svg></button><i class="sep"></i>
  <button class="b"><svg class="ic"><use href="#control"/></svg></button>
  <button class="b"><svg class="ic"><use href="#form"/></svg></button><i class="sep"></i>
  <button class="b"><svg class="ic"><use href="#edit"/></svg></button>
  <button class="b"><svg class="ic"><use href="#table"/></svg></button>
  <button class="b"><svg class="ic"><use href="#order"/></svg></button><i class="sep"></i>
  <button class="b"><svg class="ic"><use href="#opend"/></svg></button>
  <button class="b"><svg class="ic"><use href="#autof"/></svg></button><i class="sep"></i>
  <button class="b"><svg class="ic"><use href="#pos"/></svg></button>
  <button class="b"><svg class="ic"><use href="#anchor"/></svg></button><button class="dd"></button><i class="sep"></i>
  <button class="b"><svg class="ic"><use href="#align"/></svg></button><button class="dd"></button><i class="sep"></i>
  <button class="b"><svg class="ic"><use href="#grid"/></svg></button>
  <button class="b"><svg class="ic"><use href="#snap"/></svg></button>
  <button class="b"><svg class="ic"><use href="#guides"/></svg></button>
  <button class="over"></button><i class="edge"></i>
  <i class="grip second"></i>
  <button class="b"><svg class="ic"><use href="#arrow"/></svg></button><i class="sep"></i>
  <button class="b"><svg class="ic"><use href="#line"/></svg></button>
  <button class="b"><svg class="ic"><use href="#rect"/></svg></button>
  <button class="b"><svg class="ic"><use href="#oval"/></svg></button>
  <button class="b"><svg class="ic"><use href="#free"/></svg></button>
  <button class="b"><svg class="ic"><use href="#text"/></svg></button>
  <button class="b"><svg class="ic"><use href="#call"/></svg></button><i class="sep"></i>
  <button class="b"><svg class="ic"><use href="#diamond"/></svg></button><button class="dd"></button>
  <button class="b"><svg class="ic"><use href="#smile"/></svg></button><button class="dd"></button>
  <button class="b"><svg class="ic"><use href="#harrow"/></svg></button><button class="dd"></button>
  <button class="b"><svg class="ic"><use href="#flow"/></svg></button><button class="dd"></button>
  <button class="b"><svg class="ic"><use href="#bubble"/></svg></button><button class="dd"></button>
  <button class="b"><svg class="ic"><use href="#star"/></svg></button><button class="dd"></button><i class="sep"></i>
  <button class="b"><svg class="ic"><use href="#points"/></svg></button><i class="sep"></i>
  <button class="b"><svg class="ic"><use href="#fontw"/></svg></button>
  <button class="b"><svg class="ic"><use href="#shapes"/></svg></button><i class="sep"></i>
  <button class="over end"><svg width="9" height="7"><path d="M1 .5l3 3-3 3M5 .5l3 3-3 3" fill="none" stroke="#000" stroke-width="1.300"/></svg></button>
</div>

<footer class="status">
  <span class="s1">Pagina 1 / 1</span><span class="s2">Predefinito</span><span class="s3"></span><span class="s4"></span><span class="s5">STD</span><span class="s6"></span><span class="s7"></span><span class="s8"></span>
  <span class="s9"><button aria-label="Riduci"><svg width="11" height="11"><circle cx="5.500" cy="5.500" r="4.800" fill="#d6e8f6" stroke="#46617c"/><path d="M3 5.500h5" stroke="#1d3e62"/></svg></button><input type="range" aria-label="Zoom" value="50"><button aria-label="Aumenta"><svg width="11" height="11"><circle cx="5.500" cy="5.500" r="4.800" fill="#d6e8f6" stroke="#46617c"/><path d="M3 5.500h5M5.500 3v5" stroke="#1d3e62"/></svg></button></span>
  <span class="s10">100%</span>
</footer>
</div>
</div>
</body>
</html>
```
FILE: styles.css
```css
* { box-sizing: border-box; }
html, body { height: 100%; margin: 0; }
body { background: #2c3440; font-family: "Open Sans", "Noto Sans", sans-serif; font-size: 11px; line-height: 16px; color: #000; overflow: hidden; }
button, input, select, textarea { font: inherit; color: inherit; margin: 0; border-radius: 0; }
button { border: 0; padding: 0; background: none; }
i { font-style: normal; }
.sprite { position: absolute; width: 0; height: 0; }

.window {
  height: 100%; display: flex; flex-direction: column;
  padding: 0 7px 6px 6px; border: 1px solid #3c4658; border-right-color: #3ac4e0; border-bottom-color: #3ab0d0;
  border-radius: 7px 7px 6px 6px;
  background: linear-gradient(180deg, #b9d1ee 0, #c3d9ef 60px, #dfe9f3 190px, #c4daf1 300px, #bcd6f2 100%);
}
.titlebar { display: flex; align-items: center; height: 26px; flex: none; margin: 0 -7px 0 -6px; padding: 0 5px 0 6px; border-radius: 6px 6px 0 0;
  background:
    linear-gradient(60deg, transparent 0 860px, #ffffff40 862px 940px, transparent 945px),
    linear-gradient(180deg, #ffffff50 0, transparent 4px 17px, #a9c6dc90 20px, #d3e3ef 26px),
    linear-gradient(90deg, #dfe7f2 0, #dbe6f4 200px, #cbdcf2 420px, #b3cff3 520px, #afcdf3 800px, #c3d9ef 100%); }
.titlebar h1 { flex: 1; margin: 0 0 0 4px; font-size: 12px; font-weight: 400; line-height: 16px; white-space: nowrap; }
.winbtns { display: flex; align-self: flex-start; border: 1px solid #4e5b70; border-top: 0; border-radius: 0 0 5px 5px; overflow: hidden; }
.winbtns button { width: 25px; height: 16px; display: grid; place-items: center; border-right: 1px solid #6f7c92; background: linear-gradient(#d3ddeb 0 45%, #a5b6cf 50%, #c1d2e6); }
.winbtns .close { width: 42px; border: 0; background: linear-gradient(#dc9b90 0 45%, #b53222 50%, #d56a4c); }

.client { flex: 1; min-height: 0; display: flex; flex-direction: column; border: 1px solid #5c6878; background: #d5daed; }
.menubar { height: 27px; flex: none; display: flex; align-items: center; gap: 13px; padding: 2px 6px 0; border-bottom: 1px solid #b9bcc4; background: linear-gradient(#fff, #e9edf7 8px, #d5daed 9px); }
.menubar u { text-underline-offset: 2px; }

.ic { width: 18px; height: 18px; display: block; color: #a9adbb; }
.bar { flex: none; display: flex; align-items: center; padding-left: 3px; overflow: hidden; }
.std { height: 31px; padding-bottom: 1px; border-top: 1px solid #fff; border-bottom: 1px solid #9ea1aa; background: linear-gradient(#d5daed 45%, #e4e9f7); }
.b { width: 25px; height: 25px; flex: none; display: grid; place-items: center; }
.pressed { border: 1px solid #8f96a8; border-radius: 3px; background: linear-gradient(#eceef6, #d2d6e4 50%, #e6e9f2); }
.dd { width: 12px; height: 20px; flex: none; display: grid; place-items: center; }
.dd::after { content: ""; border: 3px solid transparent; border-top-color: #8c8f99; border-bottom: 0; }
.dd.on::after { border-top-color: #000; }
.sep { width: 8px; height: 16px; flex: none; background: linear-gradient(90deg, transparent 3px, #b9bcc6 3px 4px, transparent 4px); }
.grip { width: 3px; height: 20px; flex: none; margin-right: 5px; background: repeating-linear-gradient(#858a98 0 2px, transparent 2px 4px); background-size: 2px 100%; background-repeat: no-repeat; }
.over { width: 10px; height: 25px; flex: none; align-self: flex-end; margin-left: 7px; display: flex; flex-direction: column; align-items: center; justify-content: flex-end; padding-bottom: 3px; background: linear-gradient(#e8e8ea, #a5a5a8); }
.over::after { content: ""; border: 3px solid transparent; border-top-color: #000; border-bottom: 0; }
.std .over { margin-bottom: 1px; }
.edge { width: 2px; flex: none; align-self: stretch; border-right: 1px solid #b9bcc6; }

.work { flex: 1; min-height: 0; display: flex; background: #fff; }
.side { width: 42px; flex: none; display: flex; flex-direction: column; border-right: 2px solid #9b9ea6; background: #fff; }
.side .tools { display: flex; flex-direction: column; align-items: center; border-bottom: 1px solid #aeb1ba; background: linear-gradient(#fff, #d5daed 9px); }
.side .rest { flex: 1; border-bottom: 1px solid #9ea1aa; background: linear-gradient(#d5daed 70%, #e6ebf8); }
.hgrip { width: 27px; height: 2px; margin: 4px 0 5px; background: repeating-linear-gradient(90deg, #757a88 0 2px, transparent 2px 4px); }
.v { width: 27px; height: 27px; display: grid; place-items: center; }
.hover { width: 35px; height: 10px; margin: 7px 0 1px; display: flex; justify-content: flex-end; align-items: center; padding-right: 5px; background: linear-gradient(90deg, #f0f0f2, #a5a5a8); }
.hover::after { content: ""; border: 3px solid transparent; border-left: 4px solid #000; border-right: 0; }
.right { width: 41px; border: 0; border-left: 1px solid #fff; }
.right .cap { height: 21px; flex: none; border-bottom: 1px solid #fff; background: linear-gradient(#fff, #e9edf7 8px, #d5daed 9px); }
.right .tools { background: #d5daed; }

.page { flex: 1; min-width: 0; overflow: hidden; padding: 13px 0 0 75px; border-top: 1px solid #55585e; border-left: 1px solid #6d7076; background: #fff; }
.page h2 { width: 379px; height: 38px; margin: 0 0 0 203px; border: 1px solid #000; background: #c0c0c0; font: 700 19px/36px "Liberation Sans", Arial, sans-serif; text-align: center; }
.row { display: flex; align-items: flex-start; }
.field { display: flex; flex-direction: column; flex: none; }
.field label { font: 16px/18px "Liberation Sans", Arial, sans-serif; }
.field > input, .field > textarea { height: 35px; width: 100%; padding: 0 2px; border: 1px solid #b9b9b9; background: #fff; outline: 0; resize: none; overflow: hidden; display: block; }
.r1 { margin-top: 28px; gap: 45px; }
.w-title { width: 333px; }
.w-year { width: 138px; }
.r2 { margin-top: 13px; }
.w-plot { width: 517px; }
.r3 { margin-top: 16px; gap: 14px; }
.r3 label { height: 19px; }
.lowlabel label { padding-top: 3px; }
.w-combo { width: 168px; }
.actor { margin-left: 32px; }
.actor label { padding-left: 4px; }
.cb { display: flex; height: 35px; }
.sel { position: relative; flex: 1; border: 1px solid #b9b9b9; border-right: 0; background: #fff; }
.sel select { appearance: none; width: 100%; height: 100%; padding: 0 17px 0 1px; border: 0; background: none; outline: 0; }
.sel i { position: absolute; top: 1px; right: 0; bottom: 1px; width: 16px; display: grid; place-items: center; pointer-events: none; background: #f0f0f0; border: 1px solid #e3e3e3; border-right: 2px solid #777; border-bottom: 2px solid #777; }
.sel i::after { content: ""; border: 4px solid transparent; border-top-color: #000; border-bottom: 0; }
.cb > button { width: 16px; height: 34px; background: #f0f0f0; border: 1px solid #e3e3e3; border-right-color: #666; border-bottom: 2px solid #777; color: #301040; }
.r4 { margin-top: 49px; gap: 50px; }
.tbl { height: 132px; flex: none; border: 1px solid #999; border-radius: 1px; background: #fff; }
.films { width: 532px; }
.actors { width: 168px; height: 133px; }
table { width: 100%; table-layout: fixed; border-collapse: separate; border-spacing: 0; }
th { height: 19px; padding: 0; font-weight: 400; line-height: 16px; background: #f0f0f0; border-right: 1px solid #777; border-bottom: 1px solid #777; white-space: nowrap; }
th:last-child { border-right: 0; }
td { height: 17px; padding: 0 0 0 2px; line-height: 16px; border-right: 1px solid #bbb; border-bottom: 1px solid #bbb; white-space: nowrap; overflow: hidden; }
mark { color: #fff; background: #3399ff; }
.c1 { width: 165px; } .c2 { width: 82px; } .c3 { width: 277px; } .c4 { width: 6px; } .c5 { width: 3px; }
.r5 { margin-top: 10px; gap: 84px; padding-left: 43px; }
.rec { display: flex; align-items: center; flex: none; border: 1px solid #000; background: #f0f0f0; }
.rec .b { width: 23px; }
.n1 { width: 426px; height: 27px; }
.n2 { width: 222px; height: 31px; }
.far { margin-left: 22px; }

.scroll { width: 17px; flex: none; display: flex; flex-direction: column; border-top: 1px solid #55585e; background: #f0f0f0; }
.sa { height: 19px; display: grid; place-items: center; }
.thumb { flex: 1; margin-right: 2px; display: grid; place-items: center; border: 1px solid #979797; border-radius: 2px; background: linear-gradient(90deg, #f6f6f6, #e6e6e8 45%, #c6c7cb); }
.low { height: 42px; padding-top: 26px; }
.pg { width: 15px; height: 15px; margin: 1px 0 2px; display: grid; place-items: center; border: 1px solid #999; border-radius: 3px; background: #f8f8f8; }
.pg:last-child { margin-bottom: 0; }

.nav { height: 32px; padding-top: 2px; border-top: 1px solid #dfe1e6; border-bottom: 1px solid #b9bcc4; background: linear-gradient(#fff, #e9edf7 9px, #d5daed 10px 60%, #dfe4f4); }
.nav label { margin-left: 9px; width: 79px; white-space: nowrap; }
.nav input { width: 70px; height: 19px; padding: 0 3px; border: 1px solid #abadb3; background: #fff; }
.nav .of { width: 72px; padding-left: 6px; }
.draw { height: 31px; border-top: 1px solid #fff; background: linear-gradient(#d5daed 45%, #e4e9f7); }
.second { margin-left: 4px; }
.end { margin-left: auto; justify-content: space-between; padding-top: 2px; }
.nav .over, .draw .over { margin-bottom: 2px; }

.status { height: 22px; flex: none; display: flex; gap: 4px; padding: 2px 4px 1px 5px; border-top: 1px solid #b3b5bb; background: #f0f0f0; }
.status > span { flex: none; padding: 0 4px; border: 1px solid #999; border-radius: 1px; line-height: 16px; white-space: nowrap; }
.status .s1 { width: 135px; } .status .s2 { width: 160px; } .status .s3 { width: 180px; } .status .s4 { width: 46px; }
.status .s5 { width: 39px; text-align: center; } .status .s6 { width: 18px; } .status .s7 { width: 25px; }
.status .s8 { flex: 1; }
.status .s9 { width: 139px; display: flex; align-items: center; gap: 6px; }
.status .s10 { width: 44px; text-align: center; }
.s9 button { display: grid; }
.s9 input { flex: 1; min-width: 0; height: 12px; appearance: none; background: linear-gradient(transparent 5px, #666 5px 6px, #fff 6px 7px, transparent 7px); }
.s9 input::-webkit-slider-thumb { appearance: none; width: 8px; height: 8px; border: 1px solid #1f3f5c; border-radius: 4px; background: #55809f; }
```
